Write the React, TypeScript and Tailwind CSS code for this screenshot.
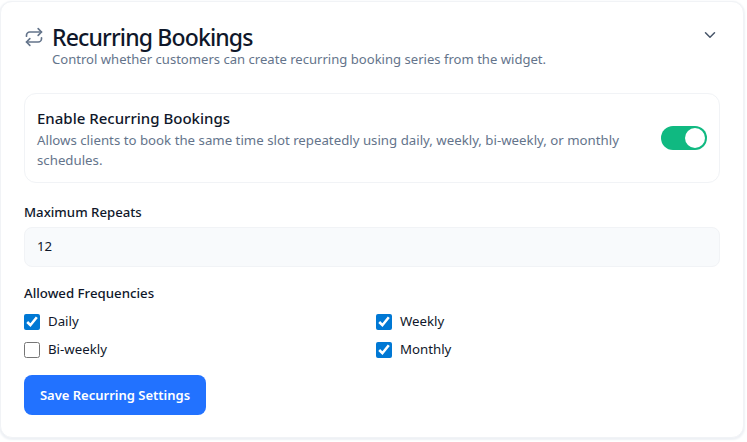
import React from 'react';
import { ChevronDown, Repeat } from 'lucide-react';

const frequencies = [
  { label: 'Daily', checked: true },
  { label: 'Weekly', checked: true },
  { label: 'Bi-weekly', checked: false },
  { label: 'Monthly', checked: true },
];

const App: React.FC = () => {
  return (
    <div className="h-[442px] w-[747px] overflow-hidden bg-white font-['Noto_Sans',sans-serif]">
      <div className="mt-px h-[437px] w-[744px] rounded-xl border border-[#f1f3f6] bg-white px-[23px] pt-[20px] shadow-[0_1px_2px_1px_#eef1f5]">
        <div className="flex items-start justify-between">
          <div>
            <div className="flex items-center gap-2">
              <Repeat size={20} strokeWidth={2} className="text-[#64748b]" />
              <h2 className="pt-px text-[23px] leading-[28px] font-medium tracking-[-0.85px] text-[#0f172a]">Recurring Bookings</h2>
            </div>
            <p className="ml-7 text-[13.08px] leading-[16px] text-[#64748b]">
              Control whether customers can create recurring booking series from the widget.
            </p>
          </div>
          <ChevronDown size={18} className="mt-[4px] mr-[1px] text-[#475569]" />
        </div>

        <div className="mt-[26px] flex h-[90px] items-center justify-between rounded-xl border border-[#f1f3f6] pr-3 pl-3">
          <div className="w-[600px] pt-[2px]">
            <div className="text-[15px] leading-[20px] font-medium text-[#0f172a]">Enable Recurring Bookings</div>
            <p className="mt-[2px] text-[13.25px] leading-[20px] text-[#64748b]">
              Allows clients to book the same time slot repeatedly using daily, weekly, bi-weekly, or monthly schedules.
            </p>
          </div>
          <div className="flex h-6 w-[46px] items-center justify-end rounded-full bg-[#10b981] pr-[2px]">
            <div className="h-[20px] w-[20px] rounded-full bg-white" />
          </div>
        </div>

        <label className="mt-[20px] block text-[13.2px] leading-[18px] font-medium text-[#0f172a]">Maximum Repeats</label>
        <div className="mt-[6px] flex h-10 w-full items-center rounded-lg border border-[#f1f3f6] bg-[#f8fafc] px-3 text-[13.2px] text-[#0f172a]">
          12
        </div>

        <div className="mt-[17px] text-[13.25px] leading-[18px] font-medium text-[#0f172a]">Allowed Frequencies</div>
        <div className="mt-[6px] grid grid-cols-2 gap-x-2 gap-y-0">
          {frequencies.map((f) => (
            <label key={f.label} className="flex h-7 items-center gap-2 text-[13.25px] text-[#0f172a]">
              <input type="checkbox" defaultChecked={f.checked} className="m-0 h-4 w-4 accent-[#0078d4]" />
              {f.label}
            </label>
          ))}
        </div>

        <button className="mt-[11px] h-10 w-[182px] rounded-lg bg-[#2272ff] pt-px text-[13px] font-semibold text-white">
          Save Recurring Settings
        </button>
      </div>
    </div>
  );
};

export default App;
